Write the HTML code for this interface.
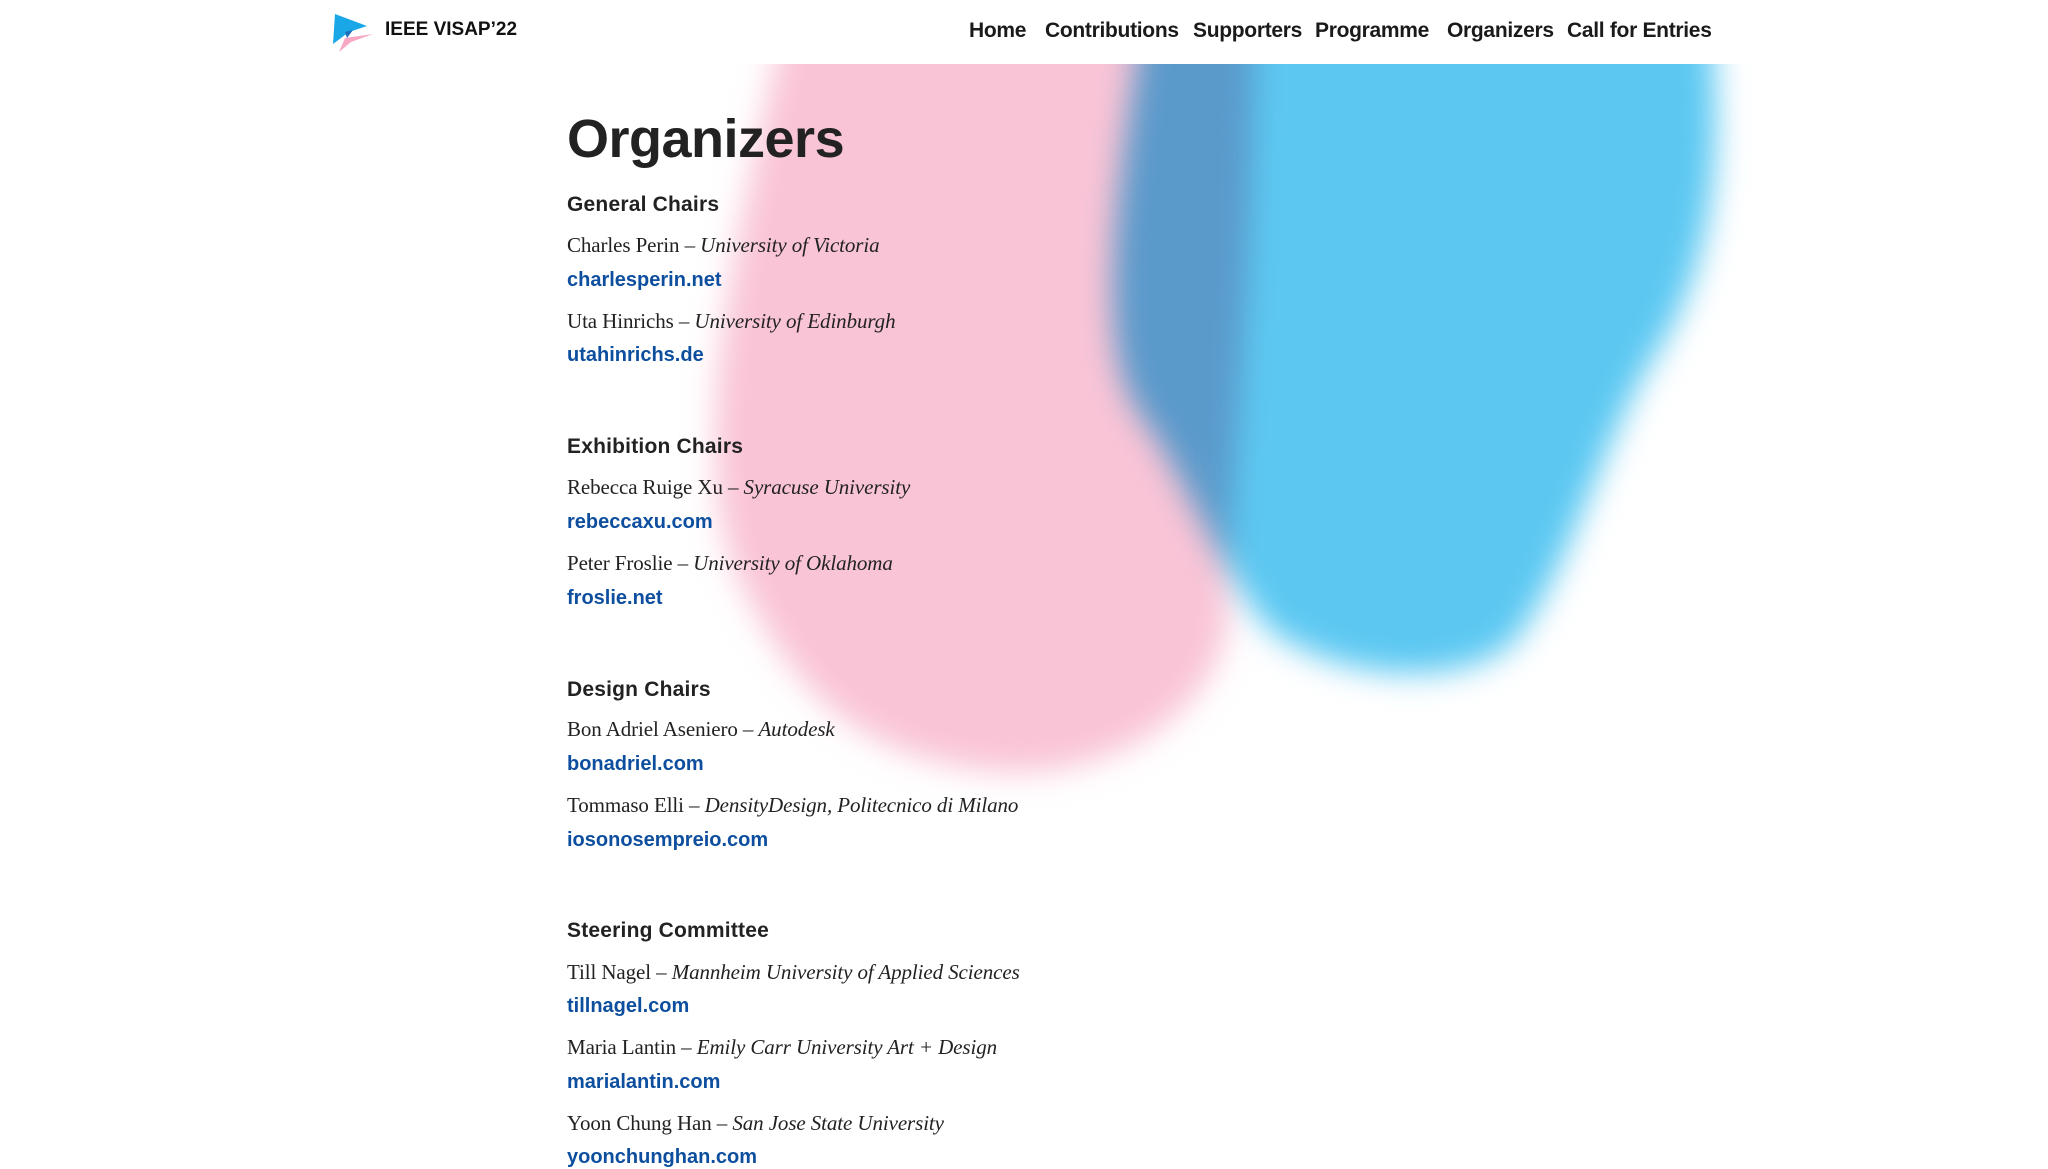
<!DOCTYPE html>
<html><head><meta charset="utf-8"><style>
*{margin:0;padding:0;box-sizing:border-box}
body{width:2048px;height:1152px;overflow:hidden;background:#fff;position:relative;font-family:"Liberation Sans",sans-serif;color:#1a1a1a}
.bg{position:absolute;left:0;top:0}
.t{position:absolute;white-space:nowrap}
.nav{position:absolute;top:19px;font-size:21px;font-weight:bold;letter-spacing:-0.3px}
h1{position:absolute;left:567px;top:108px;font-size:54px;font-weight:bold;letter-spacing:-0.5px;color:#222}
.h{font-size:21px;font-weight:bold;left:567px;color:#222;letter-spacing:0.2px}
.p{font-family:"Liberation Serif",serif;font-size:21px;left:567px;color:#222;letter-spacing:-0.1px}
.p i{font-style:italic}
.l{font-size:20px;left:567px;color:#0d4f9e;font-weight:bold}
</style></head><body>
<svg class="bg" width="2048" height="1152" viewBox="0 0 1568 882">
<defs>
<filter id="b" x="-20%" y="-20%" width="140%" height="140%"><feGaussianBlur stdDeviation="12"/></filter>
<clipPath id="c"><rect x="0" y="49" width="1568" height="900"/></clipPath>
</defs>
<g clip-path="url(#c)">
<g filter="url(#b)">
<path d="M600,20 L960,20 C960,200 945,350 940,450 C950,540 850,600 760,590 C650,580 600,520 560,430 C530,330 560,200 600,20 Z" fill="#f9c4d6"/>
</g>
<g filter="url(#b)" style="mix-blend-mode:multiply">
<path d="M875,20 L1310,20 C1322,150 1302,220 1262,280 C1222,350 1200,440 1160,490 C1120,530 1020,520 970,480 C930,430 905,360 875,320 C845,280 845,200 875,20 Z" fill="#5bc8f2"/>
</g>
</g>
</svg>
<svg class="t" style="left:331px;top:12px" width="44" height="42" viewBox="0 0 44 42">
<polygon points="14,26 42,22 20,30 8,40" fill="#f7a8c4"/>
<polygon points="4,2 36,14 18,20 2,32" fill="#1aa7e8"/>
<polygon points="14,20 22,18 16,26" fill="#1a6fb8"/>
</svg>
<div class="t" style="left:385px;top:19px;font-size:19px;font-weight:bold;color:#111">IEEE VISAP’22</div>
<div class="nav" style="left:969px">Home</div>
<div class="nav" style="left:1045px">Contributions</div>
<div class="nav" style="left:1193px">Supporters</div>
<div class="nav" style="left:1315px">Programme</div>
<div class="nav" style="left:1447px">Organizers</div>
<div class="nav" style="left:1567px">Call for Entries</div>
<h1 class="t">Organizers</h1>
<div class="t h" style="top:193px">General Chairs</div>
<div class="t p" style="top:233px">Charles Perin – <i>University of Victoria</i></div>
<div class="t l" style="top:269px">charlesperin.net</div>
<div class="t p" style="top:309px">Uta Hinrichs – <i>University of Edinburgh</i></div>
<div class="t l" style="top:344px">utahinrichs.de</div>
<div class="t h" style="top:435px">Exhibition Chairs</div>
<div class="t p" style="top:475px">Rebecca Ruige Xu – <i>Syracuse University</i></div>
<div class="t l" style="top:511px">rebeccaxu.com</div>
<div class="t p" style="top:551px">Peter Froslie – <i>University of Oklahoma</i></div>
<div class="t l" style="top:587px">froslie.net</div>
<div class="t h" style="top:678px">Design Chairs</div>
<div class="t p" style="top:717px">Bon Adriel Aseniero – <i>Autodesk</i></div>
<div class="t l" style="top:753px">bonadriel.com</div>
<div class="t p" style="top:793px">Tommaso Elli – <i>DensityDesign, Politecnico di Milano</i></div>
<div class="t l" style="top:829px">iosonosempreio.com</div>
<div class="t h" style="top:919px">Steering Committee</div>
<div class="t p" style="top:960px">Till Nagel – <i>Mannheim University of Applied Sciences</i></div>
<div class="t l" style="top:995px">tillnagel.com</div>
<div class="t p" style="top:1035px">Maria Lantin – <i>Emily Carr University Art + Design</i></div>
<div class="t l" style="top:1071px">marialantin.com</div>
<div class="t p" style="top:1111px">Yoon Chung Han – <i>San Jose State University</i></div>
<div class="t l" style="top:1146px">yoonchunghan.com</div>
</body></html>
